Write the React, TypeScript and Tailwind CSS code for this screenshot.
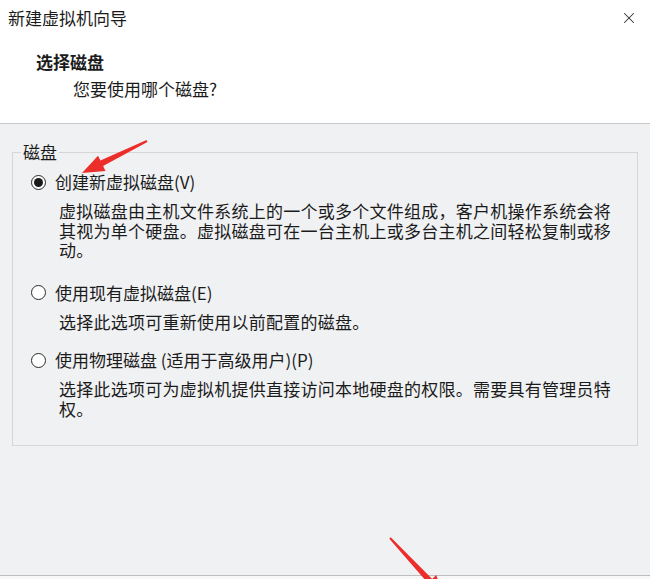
import { X } from 'lucide-react'

const options = [
  {
    label: '创建新虚拟磁盘(V)',
    checked: true,
    desc: '虚拟磁盘由主机文件系统上的一个或多个文件组成，客户机操作系统会将其视为单个硬盘。虚拟磁盘可在一台主机上或多台主机之间轻松复制或移动。',
  },
  {
    label: '使用现有虚拟磁盘(E)',
    checked: false,
    desc: '选择此选项可重新使用以前配置的磁盘。',
  },
  {
    label: '使用物理磁盘 (适用于高级用户)(P)',
    checked: false,
    desc: '选择此选项可为虚拟机提供直接访问本地硬盘的权限。需要具有管理员特权。',
  },
]

function Radio({ checked }: { checked: boolean }) {
  return (
    <span className="w-[15px] h-[15px] rounded-full border-[1.5px] border-[#2a2a2a] bg-white flex items-center justify-center shrink-0">
      {checked && <span className="w-[9px] h-[9px] rounded-full bg-[#1a1a1a]" />}
    </span>
  )
}

// red annotation arrow: tail -> tip
function arrowPoints(tx: number, ty: number, px: number, py: number) {
  const len = Math.hypot(px - tx, py - ty)
  const dx = (px - tx) / len
  const dy = (py - ty) / len
  const nx = -dy
  const ny = dx
  const L = 22
  const bx = px - dx * L
  const by = py - dy * L
  const p = (x: number, y: number) => `${x.toFixed(1)},${y.toFixed(1)}`
  return [
    p(tx + nx * 1, ty + ny * 1),
    p(bx + nx * 3, by + ny * 3),
    p(bx + nx * 8.5, by + ny * 8.5),
    p(px, py),
    p(bx - nx * 8.5, by - ny * 8.5),
    p(bx - nx * 3, by - ny * 3),
    p(tx - nx * 1, ty - ny * 1),
  ].join(' ')
}

export default function App() {
  return (
    <div
      className="relative w-[650px] h-[579px] flex flex-col bg-[#f0f1f3] text-[#1b1b1b] overflow-hidden"
      style={{ fontFamily: '"Noto Sans CJK SC", "Noto Sans", sans-serif' }}
    >
      {/* Header */}
      <div className="h-[124px] shrink-0 bg-white border-b border-[#c9c9c9] px-2 pt-[7px] flex flex-col">
        <div className="flex items-center justify-between">
          <span className="text-[17px] leading-[22px]">新建虚拟机向导</span>
          <X className="w-[18px] h-[18px] mr-[4px] text-[#333]" strokeWidth={1.4} />
        </div>
        <div className="ml-[28px] mt-[22px] text-[17px] leading-[22px] font-bold">选择磁盘</div>
        <div className="ml-[65px] mt-[5px] text-[17px] leading-[22px]">您要使用哪个磁盘?</div>
      </div>

      {/* Body */}
      <div className="flex-1 px-3 pt-[17px]">
        <fieldset className="h-[305px] border border-[#d6d6d6] pl-[18px] pr-2 pb-2">
          <legend className="-ml-[10px] px-[2px] text-[17px] leading-[22px]">磁盘</legend>
          <div className="flex flex-col mt-[8px]">
            {options.map((o, i) => (
              <div key={i} className={i === 0 ? '' : i === 1 ? 'mt-[22px]' : 'mt-[18px]'}>
                <div className="flex items-center gap-[9px]">
                  <Radio checked={o.checked} />
                  <span className="text-[17px] leading-[22px]">{o.label}</span>
                </div>
                <p className="ml-[28px] mt-[8px] w-[560px] text-[17px] leading-[19.5px] tracking-[0.25px]">
                  {o.desc}
                </p>
              </div>
            ))}
          </div>
        </fieldset>
      </div>

      {/* Footer edge */}
      <div className="h-[4px] shrink-0 border-t border-[#bdbdbd] bg-[#f7f7f7]" />

      {/* annotation arrows */}
      <svg className="absolute inset-0 pointer-events-none" width="650" height="579">
        <polygon points={arrowPoints(147, 141, 82, 173)} fill="#ec2d2a" />
        <polygon points={arrowPoints(390, 538, 445, 597)} fill="#ec2d2a" />
      </svg>
    </div>
  )
}
